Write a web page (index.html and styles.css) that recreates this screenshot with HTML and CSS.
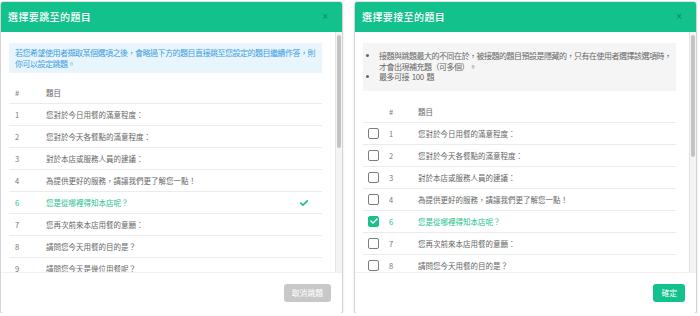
FILE: index.html
```html
<!DOCTYPE html>
<html lang="zh-Hant">
<head>
<meta charset="utf-8">
<title>選擇題目</title>
<link rel="stylesheet" href="styles.css">
</head>
<body>
<div class="page">
  <section class="dialog">
    <header class="dlg-head">
      <h2 class="dlg-title">選擇要跳至的題目</h2>
      <span class="dlg-close">×</span>
    </header>
    <div class="dlg-main">
      <div class="dlg-body">
        <div class="info info-blue">若您希望使用者擷取某個選項之後，會略過下方的題目直接跳至您設定的題目繼續作答，則<br>你可以設定跳題。</div>
        <table class="qtable qtable-jump">
          <thead>
            <tr><th class="c-num">#</th><th class="c-title">題目</th><th class="c-check"></th></tr>
          </thead>
          <tbody>
            <tr><td class="c-num">1</td><td class="c-title">您對於今日用餐的滿意程度：</td><td class="c-check"></td></tr>
            <tr><td class="c-num">2</td><td class="c-title">您對於今天各餐點的滿意程度：</td><td class="c-check"></td></tr>
            <tr><td class="c-num">3</td><td class="c-title">對於本店或服務人員的建議：</td><td class="c-check"></td></tr>
            <tr><td class="c-num">4</td><td class="c-title">為提供更好的服務，請讓我們更了解您一點！</td><td class="c-check"></td></tr>
            <tr class="is-selected"><td class="c-num">6</td><td class="c-title">您是從哪裡得知本店呢？</td><td class="c-check"><svg class="tick" width="8" height="6" viewBox="0 0 8 6"><path d="M0.8 3.1 L3 5.2 L7.3 0.9" fill="none" stroke="currentColor" stroke-width="1.7" stroke-linecap="round" stroke-linejoin="round"/></svg></td></tr>
            <tr><td class="c-num">7</td><td class="c-title">您再次前來本店用餐的意願：</td><td class="c-check"></td></tr>
            <tr><td class="c-num">8</td><td class="c-title">請問您今天用餐的目的是？</td><td class="c-check"></td></tr>
            <tr><td class="c-num">9</td><td class="c-title">請問您今天是幾位用餐呢？</td><td class="c-check"></td></tr>
          </tbody>
        </table>
      </div>
      <div class="vscroll"><div class="vscroll-thumb thumb-jump"></div></div>
    </div>
    <footer class="dlg-foot">
      <button class="btn btn-gray" type="button">取消跳題</button>
    </footer>
  </section>

  <section class="dialog">
    <header class="dlg-head">
      <h2 class="dlg-title">選擇要接至的題目</h2>
      <span class="dlg-close">×</span>
    </header>
    <div class="dlg-main">
      <div class="dlg-body">
        <div class="info info-gray">
          <ul class="info-list">
            <li>接題與跳題最大的不同在於，被接題的題目預設是隱藏的，只有在使用者選擇該選項時，<br>才會出現補充題（可多個）。</li>
            <li>最多可接 100 題</li>
          </ul>
        </div>
        <table class="qtable qtable-link">
          <thead>
            <tr><th class="c-box"></th><th class="c-num">#</th><th class="c-title">題目</th></tr>
          </thead>
          <tbody>
            <tr><td class="c-box"><span class="cbox"></span></td><td class="c-num">1</td><td class="c-title">您對於今日用餐的滿意程度：</td></tr>
            <tr><td class="c-box"><span class="cbox"></span></td><td class="c-num">2</td><td class="c-title">您對於今天各餐點的滿意程度：</td></tr>
            <tr><td class="c-box"><span class="cbox"></span></td><td class="c-num">3</td><td class="c-title">對於本店或服務人員的建議：</td></tr>
            <tr><td class="c-box"><span class="cbox"></span></td><td class="c-num">4</td><td class="c-title">為提供更好的服務，請讓我們更了解您一點！</td></tr>
            <tr class="is-selected"><td class="c-box"><span class="cbox cbox-on"><svg width="8" height="6" viewBox="0 0 8 6"><path d="M0.9 3 L3 5 L7.1 0.9" fill="none" stroke="#fff" stroke-width="1.4" stroke-linecap="round" stroke-linejoin="round"/></svg></span></td><td class="c-num">6</td><td class="c-title">您是從哪裡得知本店呢？</td></tr>
            <tr><td class="c-box"><span class="cbox"></span></td><td class="c-num">7</td><td class="c-title">您再次前來本店用餐的意願：</td></tr>
            <tr><td class="c-box"><span class="cbox"></span></td><td class="c-num">8</td><td class="c-title">請問您今天用餐的目的是？</td></tr>
          </tbody>
        </table>
      </div>
      <div class="vscroll"><div class="vscroll-thumb thumb-link"></div></div>
    </div>
    <footer class="dlg-foot">
      <button class="btn btn-green" type="button">確定</button>
    </footer>
  </section>
</div>
</body>
</html>
```

FILE: styles.css
```css
html, body {
  margin: 0;
  padding: 0;
  background: #ffffff;
}

body {
  font-family: "Noto Sans CJK TC", "Noto Sans", "Liberation Sans", sans-serif;
  color: #666666;
}

.page {
  display: flex;
  gap: 13px;
  padding: 2px 0 0 1px;
}

.dialog {
  width: 341px;
  height: 311px;
  display: flex;
  flex-direction: column;
  background: #ffffff;
  border-radius: 2px;
  overflow: hidden;
  box-shadow: 0 0 0 1px rgba(0, 0, 0, 0.08), 0 1px 3px rgba(0, 0, 0, 0.28);
}

.dlg-head {
  flex: 0 0 30px;
  display: flex;
  align-items: center;
  justify-content: space-between;
  background: #13c18d;
  padding: 0 14px 0 7px;
}

.dlg-title {
  margin: 0;
  font-size: 10px;
  font-weight: 500;
  letter-spacing: 0.4px;
  color: #ffffff;
  line-height: 1;
}

.dlg-close {
  font-size: 10px;
  line-height: 1;
  color: rgba(0, 0, 0, 0.35);
  font-family: "Liberation Sans", sans-serif;
}

.dlg-main {
  flex: 1 1 auto;
  min-height: 0;
  display: flex;
}

.dlg-body {
  flex: 1 1 auto;
  min-width: 0;
  overflow: hidden;
  padding: 11px 13px 0 8px;
}

.vscroll {
  flex: 0 0 7px;
  box-sizing: border-box;
  background: #f4f4f4;
  border-left: 1px solid #e3e3e3;
  padding: 3px 1px 0 1px;
}

.vscroll-thumb {
  background: #c3c3c3;
  border-radius: 3px;
}

.thumb-jump {
  height: 113px;
}

.thumb-link {
  height: 122px;
}

.info {
  font-size: 8px;
  letter-spacing: -0.5px;
  word-spacing: 1.5px;
  white-space: nowrap;
}

.info-blue {
  background: #e9f5fd;
  color: #3b9de0;
  line-height: 11px;
  padding: 4px 6px;
}

.info-gray {
  background: #f5f5f5;
  color: #666666;
  line-height: 10.5px;
  padding: 8px 6px 8px 0;
}

.info-list {
  margin: 0;
  padding-left: 16px;
}

.qtable {
  width: 100%;
  border-collapse: collapse;
  margin-top: 9px;
  font-size: 7.5px;
}

.qtable-link {
  margin-top: 10px;
}

.qtable th,
.qtable td {
  text-align: left;
  font-weight: 400;
  padding: 0;
  border-bottom: 1px solid #ebebeb;
  vertical-align: middle;
}

.qtable th {
  height: 21px;
  color: #666666;
}

.qtable td {
  height: 21px;
}

.qtable .c-num {
  color: #777777;
}

.qtable-jump .c-num {
  width: 31px;
  padding-left: 6px;
}

.qtable-jump .c-check {
  width: 36px;
  text-align: center;
}

.qtable-link .c-box {
  width: 17px;
  padding-left: 5px;
}

.qtable-link .c-num {
  width: 29px;
  padding-left: 4px;
}

.qtable tr.is-selected td {
  color: #22bf8a;
}

.tick {
  display: block;
  margin: 0 auto;
  color: #22bf8a;
}

.cbox {
  display: flex;
  align-items: center;
  justify-content: center;
  width: 9px;
  height: 9px;
  border: 1px solid #7c7c7c;
  border-radius: 2px;
  box-sizing: content-box;
}

.cbox-on {
  background: #19c08c;
  border-color: #19c08c;
}

.dlg-foot {
  flex: 0 0 41px;
  display: flex;
  align-items: center;
  justify-content: flex-end;
  padding: 0 11px;
  border-top: 1px solid #f0f0f0;
  box-sizing: border-box;
}

.btn {
  height: 18px;
  padding: 0 8px;
  border: none;
  border-radius: 3px;
  font-family: "Noto Sans CJK TC", "Noto Sans", sans-serif;
  font-size: 7.8px;
  color: #ffffff;
  line-height: 18px;
}

.btn-gray {
  background: #c8c8c8;
}

.btn-green {
  background: #13c18d;
}
```
